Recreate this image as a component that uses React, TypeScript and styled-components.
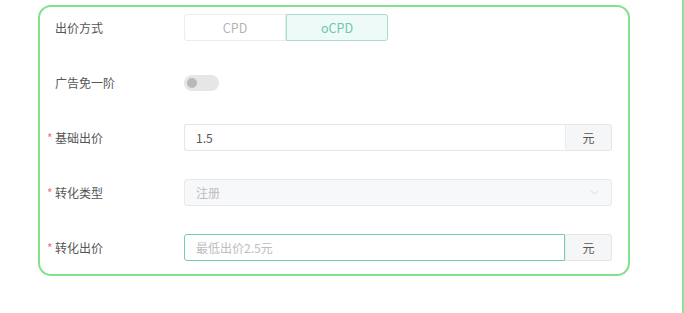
import styled, { createGlobalStyle } from "styled-components"
import { ChevronDown } from "lucide-react"

const GlobalStyle = createGlobalStyle`
  html, body {
    margin: 0;
    padding: 0;
    background: #fff;
  }
  body {
    font-family: "Noto Sans CJK SC", "Noto Sans", sans-serif;
    font-size: 12px;
    color: #444;
  }
`

export default function App() {
  return (
    <Page>
      <GlobalStyle />
      <Card>
        <Row>
          <Label>出价方式</Label>
          <Segmented>
            <Segment>CPD</Segment>
            <Segment $active>oCPD</Segment>
          </Segmented>
        </Row>
        <Row>
          <Label>广告免一阶</Label>
          <Switch>
            <Knob />
          </Switch>
        </Row>
        <Row>
          <Label $required>基础出价</Label>
          <InputGroup>
            <Input>1.5</Input>
            <Addon>元</Addon>
          </InputGroup>
        </Row>
        <Row>
          <Label $required>转化类型</Label>
          <Select>
            <span>注册</span>
            <ChevronDown size={13} strokeWidth={1.2} color="#c4c4c4" />
          </Select>
        </Row>
        <Row>
          <Label $required>转化出价</Label>
          <InputGroup>
            <Input $focused $placeholder>最低出价2.5元</Input>
            <Addon>元</Addon>
          </InputGroup>
        </Row>
      </Card>
      <EdgeLine />
    </Page>
  )
}

const Page = styled.div`
  width: 684px;
  height: 313px;
  display: flex;
  align-items: flex-start;
  box-sizing: border-box;
  padding: 5px 0 0 38px;
`
const Card = styled.div`
  width: 592px;
  height: 271px;
  box-sizing: border-box;
  border: 2px solid #82e18d;
  border-radius: 13px;
  padding: 7px 16px 0 15px;
  display: flex;
  flex-direction: column;
  gap: 28px;
`
const EdgeLine = styled.div`
  margin-left: auto;
  margin-top: -5px;
  width: 2px;
  height: 313px;
  background: #8ee197;
`
const Row = styled.div`
  display: flex;
  align-items: center;
  height: 27px;
`
const Label = styled.div<{ $required?: boolean }>`
  position: relative;
  width: 129px;
  flex-shrink: 0;
  color: #565656;
  font-size: 12px;
  &::before {
    content: ${(p) => (p.$required ? '"*"' : "none")};
    position: absolute;
    left: -8px;
    top: 0;
    color: #e8777a;
    font-size: 12px;
  }
`
const Segmented = styled.div`
  display: flex;
  width: 204px;
  height: 27px;
`
const Segment = styled.div<{ $active?: boolean }>`
  flex: 1;
  display: flex;
  align-items: center;
  justify-content: center;
  box-sizing: border-box;
  font-size: 12.5px;
  border: 1px solid ${(p) => (p.$active ? "#a6ddd0" : "#ececec")};
  background: ${(p) => (p.$active ? "#eefaf7" : "#fff")};
  color: ${(p) => (p.$active ? "#6cc6b3" : "#b5b5b5")};
  border-radius: ${(p) => (p.$active ? "0 3px 3px 0" : "3px 0 0 3px")};
`
const Switch = styled.div`
  width: 35px;
  height: 16px;
  border-radius: 8px;
  background: #e6e6e6;
  display: flex;
  align-items: center;
  padding-left: 3px;
  box-sizing: border-box;
`
const Knob = styled.div`
  width: 10px;
  height: 10px;
  border-radius: 50%;
  background: #b9b9b9;
`
const InputGroup = styled.div`
  flex: 1;
  display: flex;
  height: 27px;
`
const Input = styled.div<{ $focused?: boolean; $placeholder?: boolean }>`
  flex: 1;
  display: flex;
  align-items: center;
  box-sizing: border-box;
  padding-left: 11px;
  border: 1px solid ${(p) => (p.$focused ? "#72cdb6" : "#e6e6e6")};
  border-right: ${(p) => (p.$focused ? "1px solid #72cdb6" : "none")};
  border-radius: 3px 0 0 3px;
  color: ${(p) => (p.$placeholder ? "#bdbdbd" : "#555")};
  font-size: 12px;
`
const Addon = styled.div`
  width: 47px;
  display: flex;
  align-items: center;
  justify-content: center;
  box-sizing: border-box;
  background: #f5f6f8;
  border: 1px solid #e6e6e6;
  border-left: 1px solid #ececec;
  border-radius: 0 3px 3px 0;
  color: #555;
  font-size: 12px;
`
const Select = styled.div`
  flex: 1;
  height: 27px;
  display: flex;
  align-items: center;
  justify-content: space-between;
  box-sizing: border-box;
  padding: 0 10px 0 11px;
  background: #f7f8f9;
  border: 1px solid #e9e9e9;
  border-radius: 3px;
  color: #bdbdbd;
  font-size: 12px;
`
